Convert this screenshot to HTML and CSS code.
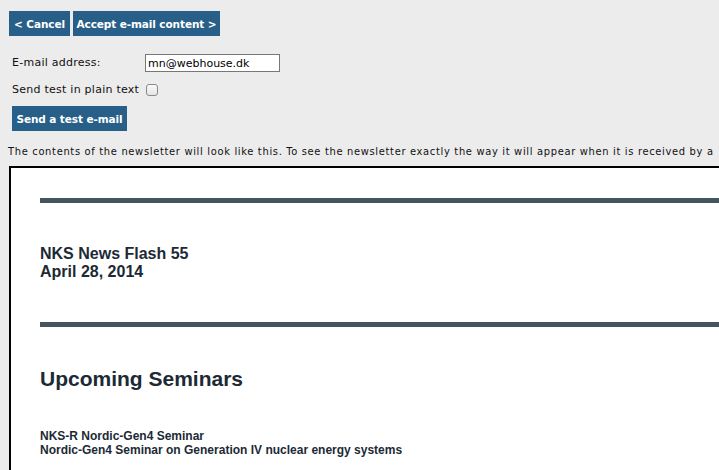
FILE: index.html
```html
<!DOCTYPE html>
<html>
<head>
<meta charset="utf-8">
<link rel="stylesheet" href="styles.css">
</head>
<body>
<div class="toolbar">
  <button class="btn btn-cancel">&lt; Cancel</button>
  <button class="btn btn-accept">Accept e-mail content &gt;</button>
</div>
<form class="test-form">
  <label class="lbl" for="email">E-mail address:</label>
  <input class="email" id="email" type="text" value="mn@webhouse.dk">
  <label class="lbl" for="plain">Send test in plain text</label>
  <span class="chk-wrap"><input class="chk" id="plain" type="checkbox"></span>
</form>
<div class="send-row"><button class="btn btn-send">Send a test e-mail</button></div>
<p class="note">The contents of the newsletter will look like this. To see the newsletter exactly the way it will appear when it is received by a</p>
<div class="preview">
  <div class="bar"></div>
  <h1 class="nl-title">NKS News Flash 55<br>April 28, 2014</h1>
  <div class="bar bar2"></div>
  <h2 class="nl-section">Upcoming Seminars</h2>
  <p class="nl-item">NKS-R Nordic-Gen4 Seminar<br>Nordic-Gen4 Seminar on Generation IV nuclear energy systems</p>
</div>
</body>
</html>
```
FILE: styles.css
```css
html, body {
  margin: 0;
  padding: 0;
  overflow: hidden;
}
body {
  background: #ececec;
  font-family: "DejaVu Sans", Verdana, sans-serif;
  font-size: 11px;
  color: #111;
  width: 719px;
  height: 470px;
}
.toolbar {
  display: flex;
  gap: 3px;
  padding: 11px 0 0 9px;
}
.btn {
  display: flex;
  align-items: center;
  justify-content: center;
  white-space: nowrap;
  background: #275f89;
  color: #fff;
  border: 0;
  border-radius: 0;
  font-family: "DejaVu Sans", Verdana, sans-serif;
  font-size: 10.5px;
  font-weight: bold;
  height: 25px;
  padding: 0;
  margin: 0;
  letter-spacing: -0.1px;
}
.btn-cancel { width: 61px; }
.btn-accept { width: 147px; }
.test-form {
  display: grid;
  grid-template-columns: 133px auto;
  justify-content: start;
  align-items: center;
  row-gap: 9px;
  margin: 18px 0 0 12px;
}
.lbl { line-height: 18px; letter-spacing: 0.25px; }
.email {
  box-sizing: border-box;
  width: 135px;
  height: 18px;
  border: 1px solid #777;
  background: #fff;
  font-family: "DejaVu Sans", Verdana, sans-serif;
  font-size: 11px;
  padding: 0 2px;
  margin: 0;
  color: #000;
}
.chk-wrap { display: flex; height: 14px; align-items: center; }
.chk {
  -webkit-appearance: none;
  appearance: none;
  box-sizing: border-box;
  width: 12px;
  height: 12px;
  margin: 0 0 0 1px;
  border: 1px solid #8a8a8a;
  border-radius: 3px;
  background: linear-gradient(#fafafa, #e4e4e4);
}
.send-row {
  margin: 7px 0 0 12px;
}
.btn-send { width: 115px; }
.note {
  margin: 14px 0 0 8px;
  white-space: nowrap;
  font-family: "DejaVu Sans Condensed", "DejaVu Sans", sans-serif;
  font-size: 11px;
  letter-spacing: 0.68px;
  line-height: 14px;
  color: #111;
}
.preview {
  margin: 7px 0 0 9px;
  width: 860px;
  height: 400px;
  background: #fff;
  border: 2px solid #000;
  padding: 30px 0 0 29px;
  color: #1c2a36;
  font-family: "Liberation Sans", Arial, sans-serif;
}
.bar {
  height: 5px;
  background: #44555e;
}
.nl-title {
  margin: 42px 0 0 0;
  font-size: 16px;
  line-height: 18px;
  font-weight: bold;
}
.bar2 { margin-top: 41px; }
.nl-section {
  margin: 39px 0 0 0;
  font-size: 21px;
  line-height: 26px;
  font-weight: bold;
}
.nl-item {
  margin: 37px 0 0 0;
  font-size: 12px;
  line-height: 14px;
  font-weight: bold;
}
```
